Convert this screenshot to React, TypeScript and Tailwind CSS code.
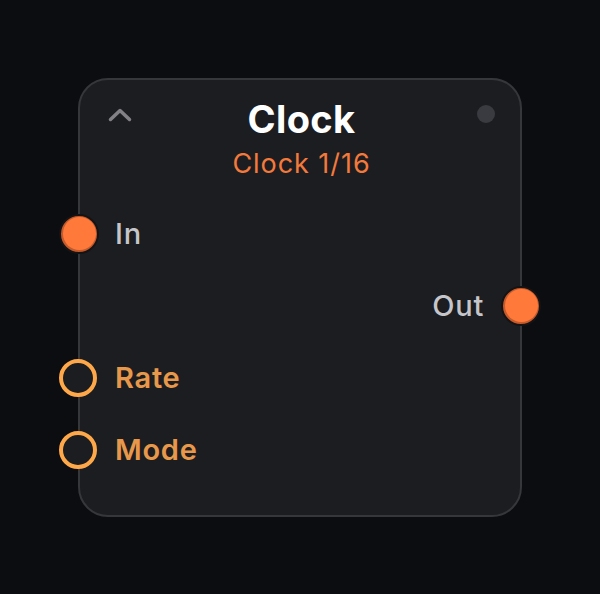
type Port = {
  label: string;
  side: "left" | "right";
  kind: "signal" | "param";
};

const PORTS: Port[] = [
  { label: "In", side: "left", kind: "signal" },
  { label: "Out", side: "right", kind: "signal" },
  { label: "Rate", side: "left", kind: "param" },
  { label: "Mode", side: "left", kind: "param" },
];

function Handle({ port }: { port: Port }) {
  const pos = port.side === "left" ? "left-[-21px]" : "right-[-21px]";
  if (port.kind === "signal") {
    return (
      <span
        className={`absolute top-1/2 -translate-y-1/2 ${pos} h-[40px] w-[40px] rounded-full border-2 border-[#141416] bg-[#c65a2a] p-[1.5px]`}
      >
        <span className="block h-full w-full rounded-full bg-[#ff7a3a]" />
      </span>
    );
  }
  return (
    <span
      className={`absolute top-1/2 -translate-y-1/2 ${pos} h-[38px] w-[38px] rounded-full border-[4px] border-[#ffa84a] bg-[#1c1d21]`}
    />
  );
}

function PortRow({ port }: { port: Port }) {
  const isLeft = port.side === "left";
  const text =
    port.kind === "signal"
      ? "font-medium text-[#c6c6ca]"
      : "font-semibold text-[#e8984a]";
  return (
    <div
      className={`relative flex h-[72px] items-center ${
        isLeft ? "justify-start pl-[35px]" : "justify-end pr-[36px]"
      }`}
    >
      <span className={`text-[29px] leading-none tracking-[0.025em] ${text}`}>{port.label}</span>
      <Handle port={port} />
    </div>
  );
}

export default function App() {
  return (
    <div
      className="flex h-[594px] w-full items-center justify-center bg-[#0c0d11]"
      style={{ fontFamily: "Inter, 'Noto Sans', sans-serif" }}
    >
      <div className="relative h-[439px] w-[444px] rounded-[30px] border-2 border-[#36373b] bg-[#1c1d21]">
        <div className="grid grid-cols-[1fr_auto_1fr] items-start pl-[28px] pr-[25px] pt-[17px]">
          <svg
            viewBox="0 0 24 14"
            className="mt-[11px] h-[14px] w-[24px] text-[#828286]"
            fill="none"
            stroke="currentColor"
            strokeWidth={3.5}
            strokeLinecap="round"
            strokeLinejoin="round"
          >
            <path d="M2.5 11.5 L12 2.5 L21.5 11.5" />
          </svg>
          <div className="flex flex-col items-center">
            <span className="text-[38px] font-bold leading-[44px] tracking-[0.01em] text-white">Clock</span>
            <span className="mt-[7px] text-[27px] leading-[32px] tracking-[0.035em] text-[#f47a3c]">
              Clock 1/16
            </span>
          </div>
          <span className="mt-[8px] h-[18px] w-[18px] justify-self-end rounded-full bg-[#3a3b40]" />
        </div>
        <div className="mt-[18px] flex flex-col">
          {PORTS.map((p) => (
            <PortRow key={p.label} port={p} />
          ))}
        </div>
      </div>
    </div>
  );
}
